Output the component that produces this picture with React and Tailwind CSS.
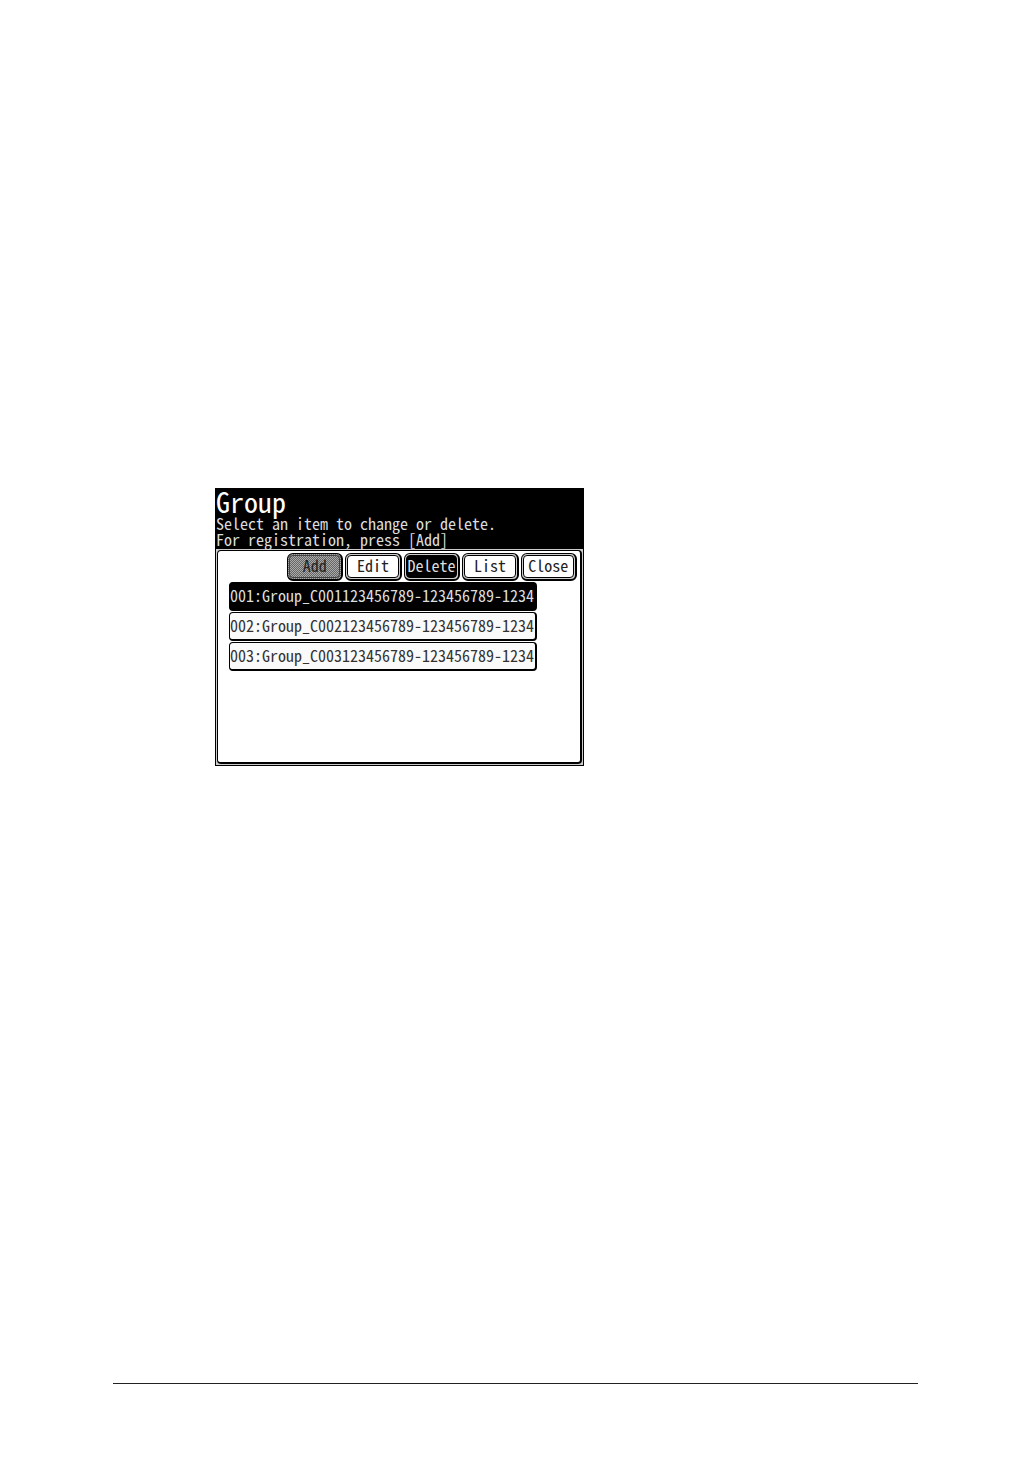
import { useState } from 'react';
import clsx from 'clsx';

const groups = [
    { id: '001', name: 'Group_C001123456789-123456789-1234' },
    { id: '002', name: 'Group_C002123456789-123456789-1234' },
    { id: '003', name: 'Group_C003123456789-123456789-1234' },
];

const actions = ['Add', 'Edit', 'Delete', 'List', 'Close'];

function KeyButton({ label, active, disabled, onClick }) {
    return (
        <button
            type="button"
            disabled={disabled}
            onClick={onClick}
            className={clsx(
                'h-7 rounded-md border border-r-2 border-b-2 border-black p-px',
                disabled
                    ? 'bg-[#888] bg-[conic-gradient(#666_25%,#aaa_0_50%,#666_0_75%,#aaa_0)] bg-[length:2px_2px] text-[#222]'
                    : 'bg-[#ccc]'
            )}>
            <span
                className={clsx(
                    'flex h-full items-center justify-center rounded-sm border pb-1',
                    disabled ? 'border-[#444]' : 'border-black',
                    !disabled && active && 'bg-black text-[#ddd]',
                    !disabled && !active && 'bg-white text-[#222]'
                )}>
                {label}
            </span>
        </button>
    );
}

function GroupRow({ group, selected, onClick }) {
    return (
        <li>
            <button
                type="button"
                onClick={onClick}
                className={clsx(
                    'flex h-[29px] w-full items-center rounded border border-r-2 border-b-2 border-black pb-0.5 whitespace-nowrap',
                    selected ? 'bg-black text-[#ddd]' : 'bg-[#fafafa] text-[#333]'
                )}>
                {group.id}:{group.name}
            </button>
        </li>
    );
}

function App() {
    const [mode, setMode] = useState('Delete');
    const [selected, setSelected] = useState('001');

    return (
        <div className="flex min-h-screen flex-col bg-white pt-[488px] pr-[114px] pb-[73px] pl-[113px]">
            <main className="ml-[102px] w-full max-w-[369px] border border-black bg-[#ccc] font-['Noto_Sans_CJK_JP','Liberation_Mono',monospace] text-base leading-4 [font-feature-settings:'hwid']">
                <header className="bg-black pb-0.5 text-[#ddd]">
                    <h1 className="pb-0.5 text-[28px] leading-6 text-white">Group</h1>
                    <p>Select an item to change or delete.</p>
                    <p>For registration, press [Add]</p>
                </header>

                <section className="m-px min-h-[214px] rounded border border-r-2 border-b-2 border-black bg-white pt-0.5">
                    <div className="ml-auto mr-[3px] grid max-w-[290px] grid-cols-5 gap-0.5">
                        {actions.map((label) => (
                            <KeyButton
                                key={label}
                                label={label}
                                active={mode === label}
                                disabled={label === 'Add'}
                                onClick={() => setMode(label)}
                            />
                        ))}
                    </div>
                    <ul className="mt-px mr-[43px] ml-[11px] flex flex-col gap-px">
                        {groups.map((group) => (
                            <GroupRow
                                key={group.id}
                                group={group}
                                selected={selected === group.id}
                                onClick={() => setSelected(group.id)}
                            />
                        ))}
                    </ul>
                </section>
            </main>

            <hr className="mt-auto w-full border-t border-[#222]" />
        </div>
    );
}

export default App;
